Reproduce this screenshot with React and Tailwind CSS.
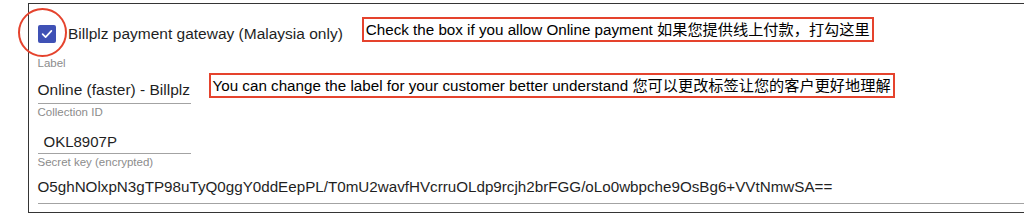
const font = { fontFamily: '"Liberation Sans", Arial, "Noto Sans CJK SC", sans-serif' };

const Note = ({ children, className = '' }) => (
  <span
    className={`inline-block whitespace-nowrap border-2 border-[#e5432d] px-[2px] leading-[21px] text-[15.2px] text-black ${className}`}
  >
    {children}
  </span>
);

const App = () => {
  return (
    <div className="w-[1024px] h-[217px] overflow-hidden bg-white pl-[27.5px] pt-[3px]" style={font}>
      <div className="w-[1010px] border-l-[1.5px] border-t-[1.5px] border-b-[1.5px] border-[#353535] pl-[9px] pt-[12.5px] pb-[8px]">
        {/* checkbox row */}
        <div className="flex items-start h-[25px]">
          <div className="relative mt-[8px] w-[18px] h-[18px] mr-[12.5px] shrink-0">
            <div className="w-[18px] h-[18px] rounded-[2px] bg-[#3f51b5] flex items-center justify-center">
              <svg width="12" height="10" viewBox="0 0 12 10">
                <path d="M1.6 5.2 L4.6 8.1 L10.4 1.9" fill="none" stroke="white" strokeWidth="1.7" strokeLinecap="round" strokeLinejoin="round" />
              </svg>
            </div>
            <div className="absolute left-[-20px] top-[-17px] w-[49px] h-[49px] rounded-full border-[2.5px] border-[#e5432d]" />
          </div>
          <span className="mt-[8px] whitespace-nowrap text-[15.5px] leading-[18px] text-[#1f1f1f]">
            Billplz payment gateway (Malaysia only)
          </span>
          <Note className="ml-[19px]">Check the box if you allow Online payment 如果您提供线上付款，打勾这里</Note>
        </div>

        {/* label row */}
        <div className="mt-[15px] flex items-start">
          <div className="flex flex-col">
            <span className="text-[11.5px] leading-[13px] text-[#8c8c8c]">Label</span>
            <div className="w-[153px] border-b border-[#a3a3a3] pt-[11px] pb-[4px]">
              <span className="block whitespace-nowrap text-[15.5px] leading-[18px] text-[#1f1f1f]">Online (faster) - Billplz</span>
            </div>
          </div>
          <Note className="ml-[18px] mt-[16px]">You can change the label for your customer better understand 您可以更改标签让您的客户更好地理解</Note>
        </div>

        {/* collection id */}
        <div className="mt-[2px] flex flex-col">
          <span className="text-[11.5px] leading-[13px] text-[#8c8c8c]">Collection ID</span>
          <div className="w-[153px] border-b border-[#a3a3a3] pt-[14px] pb-[2px] pl-[6px]">
            <span className="block text-[15px] leading-[18px] text-[#1f1f1f]">OKL8907P</span>
          </div>
        </div>

        {/* secret key */}
        <div className="mt-[2px] flex flex-col">
          <span className="text-[11.5px] leading-[13px] text-[#8c8c8c]">Secret key (encrypted)</span>
          <div className="w-full border-b border-[#a3a3a3] pt-[9px] pb-[7px]">
            <span className="block whitespace-nowrap text-[15.2px] leading-[18px] text-[#1f1f1f]">
              O5ghNOlxpN3gTP98uTyQ0ggY0ddEepPL/T0mU2wavfHVcrruOLdp9rcjh2brFGG/oLo0wbpche9OsBg6+VVtNmwSA==
            </span>
          </div>
        </div>
      </div>
    </div>
  );
};

export default App;
